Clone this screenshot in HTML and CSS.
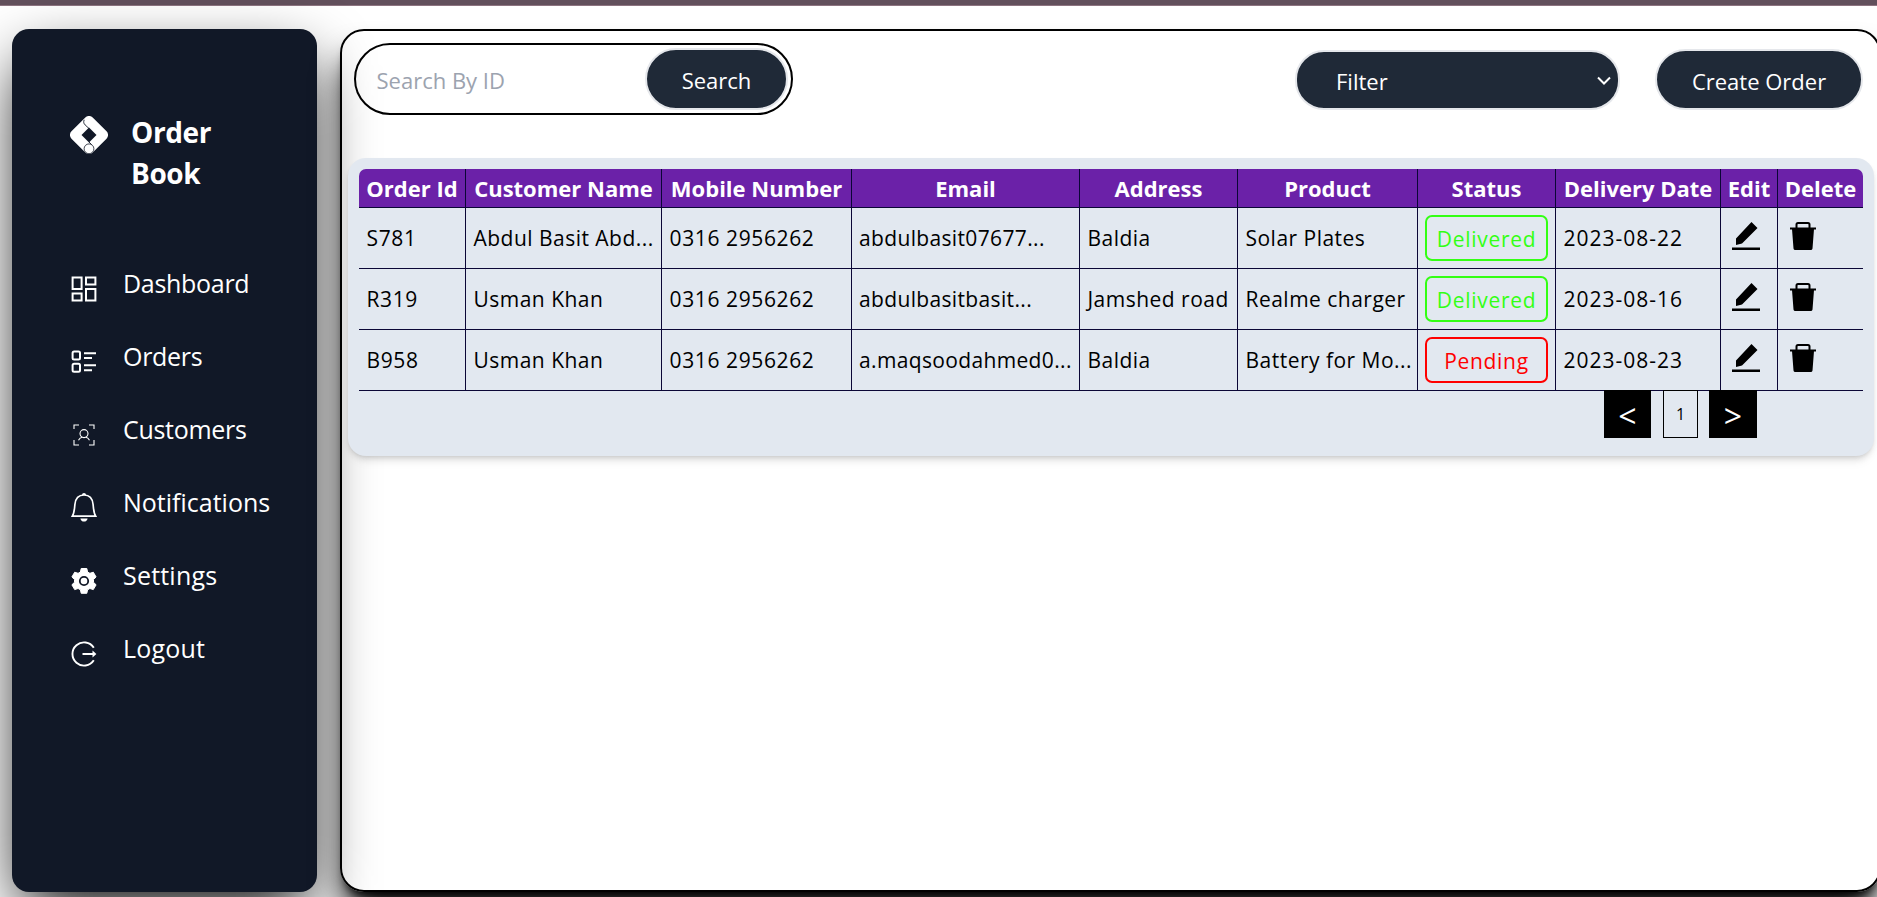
FILE: index.html
```html
<!DOCTYPE html>
<html lang="en">
<head>
<meta charset="utf-8">
<title>Order Book</title>
<link rel="stylesheet" href="styles.css">
</head>
<body>
<div class="topbar"></div>
<div class="layout">
  <aside class="sidebar">
    <div class="brand">
      <svg class="brand-icon" viewBox="0 0 38 38">
        <rect x="4" y="4" width="30" height="30" rx="5.200" transform="rotate(45 19 19)" fill="#fff"/>
        <path d="M19 11.500 26.500 19 19 26.500 11.500 19z" fill="#111827"/>
        <path d="M14.200 3.800c-.9 2.300-.5 3.700.9 5.100L19 12.500M19 26l3 3" fill="none" stroke="#111827" stroke-width=".9"/>
        <circle cx="19" cy="32.800" r="4.900" fill="#fff" stroke="#111827" stroke-width=".8"/>
      </svg>
      <h1 class="brand-name">Order Book</h1>
    </div>
    <nav class="menu">
      <a class="item"><svg class="icon" viewBox="0 0 26 28"><g fill="none" stroke="#fff" stroke-width="2"><path d="M1.600 2.600h9v11.500h-9zM15 2.600h9.400v7H15zM15 14h9.400v11.500H15zM1.600 18.500h9v7h-9z"/></g></svg><span class="label tight">Dashboard</span></a>
      <a class="item"><svg class="icon" viewBox="0 0 26 28"><g fill="none" stroke="#fff" stroke-width="2"><rect x="1.600" y="3.600" width="7.400" height="8" rx="1.500"/><rect x="1.600" y="15.800" width="7.400" height="8" rx="1.500"/><path d="M13 5.200h12M13 10h8M13 17.200h12M13 22.200h8"/></g></svg><span class="label tight">Orders</span></a>
      <a class="item"><svg class="icon" viewBox="0 0 26 28"><g fill="none" stroke="#fff" stroke-width="1.100"><path d="M3 8V4h5M18 4h5v4M23 19v5h-5M8 24H3v-5"/><circle cx="13" cy="12.600" r="4"/><path d="M7.500 19.300c1-2 2.300-2.800 3.800-3M14.700 16.300c1.500.2 2.800 1 3.800 3"/></g></svg><span class="label tight">Customers</span></a>
      <a class="item"><svg class="icon bell" viewBox="0 0 26 30"><path d="M1.300 24.200h23.400C22.600 21 22.600 17 22.100 12.500 21.600 7 18.500 3 13 3S4.400 7 3.900 12.500C3.400 17 3.400 21 1.300 24.200z" fill="none" stroke="#fff" stroke-width="1.700"/><path d="M11 3a2 2 0 0 1 4 0zM9.400 26.400h7.200c-.3 4.100-6.900 4.100-7.200 0z" fill="#fff"/></svg><span class="label">Notifications</span></a>
      <a class="item"><svg class="icon" viewBox="0 0 26 28"><path d="M10.200 1.500h5.600l.8 3.500 2.300 1.300 3.400-1.100 2.800 4.800-2.600 2.500v2.800l2.600 2.500-2.800 4.800-3.400-1.100-2.300 1.300-.8 3.500h-5.600L9.400 22.800l-2.300-1.300-3.400 1.100L.9 17.800l2.600-2.500v-2.800L.9 10l2.800-4.800 3.400 1.100L9.400 5z" fill="#fff" stroke="#fff" stroke-linejoin="round"/><circle cx="13" cy="14" r="4.200" fill="#fff" stroke="#111827" stroke-width="1.800"/></svg><span class="label wide">Settings</span></a>
      <a class="item"><svg class="icon" viewBox="0 0 26 28"><path d="M22.800 7.700a11.600 11.600 0 1 0 0 12.600M11.500 14h11" fill="none" stroke="#fff" stroke-width="1.900"/><path d="M21.500 10.500 25.400 14l-3.900 3.500z" fill="#fff"/></svg><span class="label wide">Logout</span></a>
    </nav>
  </aside>
  <main class="panel">
    <div class="toolbar">
      <div class="search">
        <span class="placeholder">Search By ID</span>
        <button class="pill search-btn">Search</button>
      </div>
      <div class="actions">
        <div class="pill filter"><span>Filter</span><svg class="chevron" viewBox="0 0 14 10"><path d="M1 1.500l6 6 6-6" fill="none" stroke="#fff" stroke-width="2"/></svg></div>
        <button class="pill create">Create Order</button>
      </div>
    </div>
    <section class="card">
      <table class="orders">
        <colgroup><col class="c1"><col class="c2"><col class="c3"><col class="c4"><col class="c5"><col class="c6"><col class="c7"><col class="c8"><col class="c9"><col class="c10"></colgroup>
        <thead>
          <tr><th>Order Id</th><th>Customer Name</th><th>Mobile Number</th><th>Email</th><th>Address</th><th>Product</th><th>Status</th><th>Delivery Date</th><th>Edit</th><th>Delete</th></tr>
        </thead>
        <tbody>
          <tr><td class="num">S781</td><td>Abdul Basit Abd...</td><td class="num">0316 2956262</td><td class="email">abdulbasit07677...</td><td>Baldia</td><td>Solar Plates</td><td><span class="status delivered">Delivered</span></td><td class="date">2023-08-22</td><td><svg class="act" viewBox="0 0 30 30"><use href="#pen"/></svg></td><td><svg class="act" viewBox="0 0 30 30"><use href="#bin"/></svg></td></tr>
          <tr><td class="num">R319</td><td>Usman Khan</td><td class="num">0316 2956262</td><td class="email">abdulbasitbasit...</td><td>Jamshed road</td><td>Realme charger</td><td><span class="status delivered">Delivered</span></td><td class="date">2023-08-16</td><td><svg class="act" viewBox="0 0 30 30"><use href="#pen"/></svg></td><td><svg class="act" viewBox="0 0 30 30"><use href="#bin"/></svg></td></tr>
          <tr><td class="num">B958</td><td>Usman Khan</td><td class="num">0316 2956262</td><td class="email">a.maqsoodahmed0...</td><td>Baldia</td><td>Battery for Mo...</td><td><span class="status pending">Pending</span></td><td class="date">2023-08-23</td><td><svg class="act" viewBox="0 0 30 30"><use href="#pen"/></svg></td><td><svg class="act" viewBox="0 0 30 30"><use href="#bin"/></svg></td></tr>
        </tbody>
      </table>
      <div class="pager"><button class="step">&lt;</button><span class="page">1</span><button class="step next">&gt;</button></div>
    </section>
  </main>
</div>
<svg class="defs">
  <symbol id="pen" viewBox="0 0 30 30"><path d="M5 17.500 20.500 1l6 6L11 22.500l-6 1.500zM1 26.600h28v2.400H1z"/></symbol>
  <symbol id="bin" viewBox="0 0 30 30"><path d="M2 6.500h26v2H2zM4 8h22l-1.500 19.500q-.2 1.500-1.700 1.500H7.200q-1.500 0-1.700-1.500z"/><path d="M8.500 7V3.500Q8.500 2 10 2h10q1.500 0 1.500 1.500V7" fill="none" stroke="#000" stroke-width="2"/></symbol>
</svg>
</body>
</html>
```
FILE: styles.css
```css
* { box-sizing: border-box; }
body { margin: 0; height: 897px; overflow: hidden; background: #fff; color: #000; font-family: "Open Sans", "Noto Sans", sans-serif; }
button { font: inherit; border: 0; margin: 0; }
.defs { display: none; }
.topbar { height: 6px; background: #62505c; border-bottom: 1px solid #8d7480; }
.layout { display: flex; gap: 23px; padding: 23px 0 0 12px; width: 1881px; }
.sidebar { width: 305px; height: 863px; flex: none; border-radius: 17px; background: #111827; color: #fff; padding: 84px 0 0 58px; box-shadow: 0 25px 64px -10px #000; }
.brand { display: flex; gap: 23px; height: 137px; }
.brand-icon { width: 38px; height: 38px; margin-top: 3px; }
.brand-name { margin: -1px 0 0; width: 100px; font-size: 28px; line-height: 41px; font-weight: 700; letter-spacing: -0.4px; }
.menu { display: flex; flex-direction: column; gap: 33.200px; padding: 12px 0 0 1px; }
.item { display: flex; height: 40px; gap: 26px; }
.icon { width: 26px; height: 28px; margin-top: 12.500px; flex: none; }
.bell { height: 30px; margin-top: 10.500px; }
.label { font-size: 25px; line-height: 36px; margin-top: 2.500px; white-space: nowrap; }
.tight { letter-spacing: -0.3px; }
.wide { letter-spacing: 0.2px; }
.panel { flex: 1; height: 863px; border: 2px solid #000; border-radius: 24px; padding: 12px 5px 0 6px; box-shadow: 0 25px 32px -5px #000, 0 8px 10px -6px #000; }
.toolbar { display: flex; height: 115px; padding: 0 11px 0 6px; }
.search { display: flex; justify-content: space-between; width: 439px; height: 72px; border: 2px solid #000; border-radius: 36px; padding: 3px 3px 0 20.500px; }
.placeholder { color: #9ca3af; font-size: 22px; line-height: 64px; }
.pill { display: block; background: #1f2937; border: 2px solid #e5e7eb; color: #fff; border-radius: 31px; font-size: 22px; text-align: center; padding: 0; }
.search-btn { width: 143px; height: 62px; padding-top: 2px; }
.actions { display: flex; gap: 35px; margin: 6px 0 0 auto; }
.filter { display: flex; justify-content: space-between; align-items: center; width: 325px; height: 60px; margin-top: 1px; padding: 2px 7px 0 39px; border-radius: 29px; }
.chevron { width: 14px; height: 10px; }
.create { width: 208px; height: 61px; padding-top: 2px; }
.card { height: 298px; border-radius: 18px; background: #e2e8f0; padding: 11px; box-shadow: 0 4px 6px -1px rgba(0,0,0,.1), 0 2px 4px -2px rgba(0,0,0,.1), 0 8px 12px -4px rgba(0,0,0,.08); }
.orders { table-layout: fixed; width: 1504px; border-collapse: separate; border-spacing: 0; font-size: 21px; }
.c1 { width: 107px; } .c2 { width: 196px; } .c3 { width: 190px; } .c4 { width: 228px; } .c5 { width: 158px; }
.c6 { width: 180px; } .c7 { width: 138px; } .c8 { width: 165px; } .c9 { width: 57px; } .c10 { width: 85px; }
th, td { border-right: 1px solid #0b0636; border-bottom: 1px solid #0b0636; white-space: nowrap; overflow: hidden; }
th:last-child, td:last-child { border-right: 0; }
th { height: 39px; padding: 0; background: #6b21a8; color: #fff; font-size: 22px; font-weight: 700; line-height: 38px; }
th:first-child { border-top-left-radius: 7px; }
th:last-child { border-top-right-radius: 7px; }
td { height: 61px; padding: 0 7px 0 7.500px; line-height: 60px; letter-spacing: 0.480px; }
.num { letter-spacing: 0.620px; }
.email { padding-left: 7px; letter-spacing: 0.350px; }
.date { letter-spacing: 1px; }
td:nth-child(7) { padding: 0 7px; }
.status { display: block; height: 46px; border: 2px solid; border-radius: 7px; text-align: center; font-weight: 500; line-height: 44px; letter-spacing: 0.700px; }
.delivered { color: #33ff14; }
.pending { color: #f00; }
.act { display: block; width: 30px; height: 30px; margin: -5px 0 0 2px; }
.pager { display: flex; margin-left: 1245px; }
.step { width: 47px; height: 48px; background: #000; color: #fff; font-size: 32px; line-height: 46px; padding: 3px 0 0; margin-top: -1px; }
.page { width: 35px; height: 48px; margin: -1px 11px 0 12px; border: 1px solid #000; font-size: 16px; line-height: 47px; text-align: center; }
.next { width: 48px; }
```
